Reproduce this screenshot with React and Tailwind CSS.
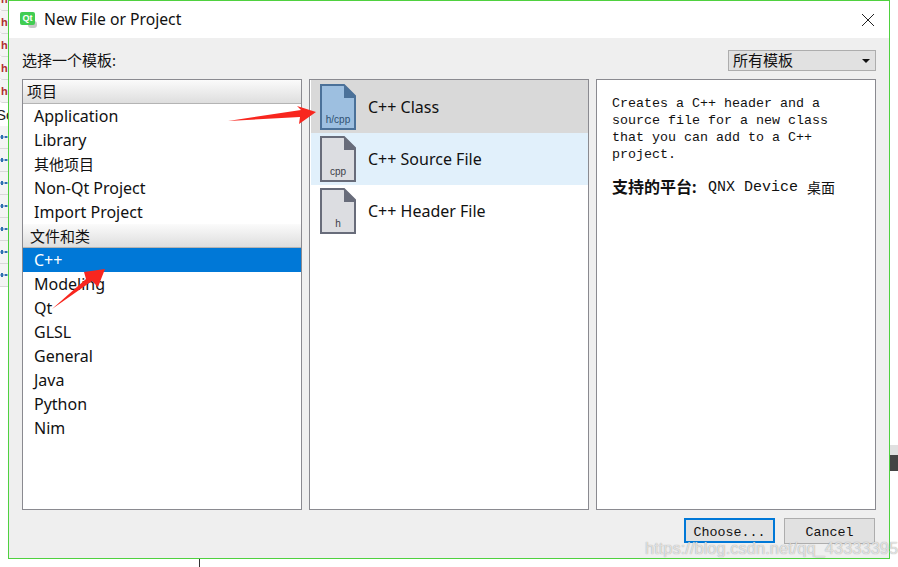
const SANS = '[font-family:"Noto_Sans","Noto_Sans_CJK_SC",sans-serif]'

const PROJECT_ROWS = ['Application', 'Library', '其他项目', 'Non-Qt Project', 'Import Project']
const FILE_ROWS = ['C++', 'Modeling', 'Qt', 'GLSL', 'General', 'Java', 'Python', 'Nim']
const TEMPLATES = [
  { name: 'C++ Class', tag: 'h/cpp', rowClass: 'bg-[#d9d9d9] h-[53px]', fill: '#9dbfe0', edge: '#4b7199', ink: '#2f4f70' },
  { name: 'C++ Source File', tag: 'cpp', rowClass: 'bg-[#e1f0fb] h-[52px]', fill: '#dcdde1', edge: '#686c7a', ink: '#3c4048' },
  { name: 'C++ Header File', tag: 'h', rowClass: 'h-[52px]', fill: '#dcdde1', edge: '#686c7a', ink: '#3c4048' },
]

function GroupHeader({ children, inset }) {
  return (
    <div className={`h-[24px] flex items-center text-[15px] text-[#111] border-b border-[#b4b4b4] bg-linear-to-b from-[#fbfbfb] to-[#dedede] ${inset}`}>
      {children}
    </div>
  )
}

function Row({ label, active }) {
  const size = label === '其他项目' ? 'text-[15px]' : 'text-[16px]'
  return (
    <div className={`h-[24px] flex items-center pl-[11px] ${size} ${active ? 'bg-[#0078d7] text-white' : 'text-[#111]'}`}>
      {label}
    </div>
  )
}

function FileIcon({ tag, fill, edge, ink }) {
  return (
    <svg width="36" height="46" viewBox="0 0 36 46" className="shrink-0">
      <path d="M1 1H24L35 12V45H1Z" fill={fill} stroke={edge} strokeWidth="2" />
      <path d="M24 1L35 12V14H24Z" fill={edge} />
      <text x="18" y="39" textAnchor="middle" fontSize="10" fontFamily="Liberation Sans, sans-serif" fill={ink}>{tag}</text>
    </svg>
  )
}

function QtLogo() {
  return (
    <div className="relative w-[17px] h-[16px]">
      <div className="absolute right-0 bottom-0 w-[9px] h-[7px] rounded-[3px] bg-[#c8c8c8]" />
      <div className="absolute left-0 top-0 w-[15px] h-[13px] rounded-[2px] bg-[#41cd52] flex items-center justify-center text-[9px] leading-none font-bold text-white font-['Liberation_Sans']">
        Qt
      </div>
    </div>
  )
}

function SideStrip() {
  const reds = [0, 1, 2, 3, 4]
  const blues = [0, 1, 2, 3, 4, 5, 6]
  return (
    <div className="w-[8px] h-[559px] overflow-hidden shrink-0">
      <div className="-mt-[12px] flex flex-col">
        {reds.map(i => (
          <div key={i} className="h-[23px] flex items-center border-b border-[#d8d8d8] bg-[#f4f4f4] rounded-bl-[3px] text-[11px] font-bold text-[#b03030] font-['Liberation_Sans'] leading-none pl-px">
            h
          </div>
        ))}
        <div className="h-[23px] flex items-center text-[15px] text-[#222] font-['Liberation_Sans'] leading-none -ml-[4px]">Sc</div>
        {blues.map(i => (
          <div key={i} className="h-[23px] flex items-center border-b border-[#d8d8d8] bg-[#f4f4f4]">
            <svg width="8" height="6" viewBox="0 0 8 6">
              <path d="M0 3H8" stroke="#3f7fc0" strokeWidth="1" />
              <path d="M2 1V5" stroke="#2f6fb0" strokeWidth="2" />
              <path d="M6 2V4" stroke="#2f6fb0" strokeWidth="2" />
            </svg>
          </div>
        ))}
      </div>
    </div>
  )
}

export default function App() {
  return (
    <div className={`relative w-[898px] h-[567px] overflow-hidden bg-white ${SANS}`}>
      <div className="flex h-[559px]">
        <SideStrip />

        <div className="w-[882px] h-[559px] shrink-0 flex flex-col border border-[#4fd13f] bg-[#efefef]">
          <div className="h-[37px] bg-white flex items-center pl-[11px] pr-[14px]">
            <QtLogo />
            <span className="ml-[7px] text-[15.7px] text-[#111]">New File or Project</span>
            <svg width="14" height="14" viewBox="0 0 14 14" className="ml-auto">
              <path d="M1 1L13 13M13 1L1 13" stroke="#222" strokeWidth="1" />
            </svg>
          </div>

          <div className="h-[41px] flex items-start justify-between pl-[13px] pr-[13px] pt-[12px]">
            <span className="text-[15px] leading-[21px] text-[#111]">选择一个模板:</span>
            <div className="w-[148px] h-[21px] border border-[#adadad] bg-[#e1e1e1] flex items-center justify-between pl-[4px] pr-[3px] text-[15px] text-[#111]">
              所有模板
              <span className="w-0 h-0 border-x-[4px] border-x-transparent border-t-[4px] border-t-[#111] mr-[2px]" />
            </div>
          </div>

          <div className="flex gap-[7px] pl-[13px] pr-[13px] h-[431px]">
            <div className="w-[280px] border border-[#8a8a90] bg-white">
              <GroupHeader inset="pl-[4px]">项目</GroupHeader>
              {PROJECT_ROWS.map(r => <Row key={r} label={r} />)}
              <GroupHeader inset="pl-[7px] pt-[2px]">文件和类</GroupHeader>
              {FILE_ROWS.map(r => <Row key={r} label={r} active={r === 'C++'} />)}
            </div>

            <div className="w-[280px] border border-[#8a8a90] bg-white pl-px">
              {TEMPLATES.map(t => (
                <div key={t.name} className={`flex items-center pl-[9px] ${t.rowClass}`}>
                  <FileIcon tag={t.tag} fill={t.fill} edge={t.edge} ink={t.ink} />
                  <span className="ml-[12px] text-[16px] text-[#111]">{t.name}</span>
                </div>
              ))}
            </div>

            <div className="w-[280px] border border-[#8a8a90] bg-white pl-[15px] pt-[15px] text-[#111] font-['Liberation_Mono','Noto_Sans_CJK_SC',monospace] text-[13.33px] leading-[17px]">
              <p>Creates a C++ header and a<br />source file for a new class<br />that you can add to a C++<br />project.</p>
              <p className="mt-[16px] flex items-center">
                <span className={`w-[96px] font-bold text-[16px] ${SANS}`}>支持的平台:</span>
                <span className="text-[15px]">QNX Device</span>
                <span className={`ml-[9px] text-[14px] ${SANS}`}>桌面</span>
              </p>
            </div>
          </div>

          <div className="flex justify-end gap-[9px] pt-[8px] pr-[14px] font-['Liberation_Mono',monospace] text-[13.33px] text-[#111]">
            <button className="w-[91px] h-[25px] border-2 border-[#0078d7] bg-[#e1e1e1] flex items-center justify-center pt-[4px]">Choose...</button>
            <button className="w-[91px] h-[26px] border border-[#adadad] bg-[#e1e1e1] flex items-center justify-center pt-[3px]">Cancel</button>
          </div>
        </div>

        <div className="w-[8px] pt-[445px] flex flex-col">
          <div className="h-[10px] bg-[#e0e0e0]" />
          <div className="h-[16px] bg-[#444]" />
        </div>
      </div>

      <div className="h-[8px] pl-[199px]">
        <div className="w-px h-full bg-[#333]" />
      </div>

      <svg className="absolute inset-0 pointer-events-none" width="898" height="567" viewBox="0 0 898 567">
        <polygon points="228,121 301,110 297,106 316,112 299,124 300,117" fill="#f8261e" />
        <polygon points="52,309 86,279 84,272 105,269 98,287 92,281" fill="#f8261e" />
      </svg>

      <div className="absolute left-[645px] top-[538px] font-['Liberation_Sans'] text-[16.5px] leading-[20px] whitespace-nowrap text-white/70 [text-shadow:0_0_1px_#8a8a8a]">
        https://blog.csdn.net/qq_43333395
      </div>
    </div>
  )
}
